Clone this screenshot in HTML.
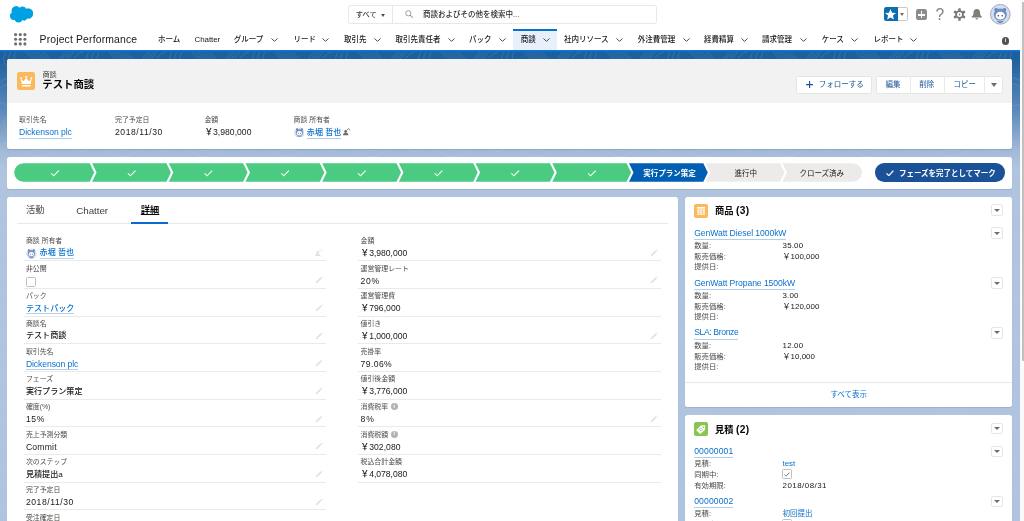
<!DOCTYPE html>
<html lang="ja">
<head>
<meta charset="utf-8">
<title>テスト商談 | Salesforce</title>
<style>
*{box-sizing:border-box;margin:0;padding:0}
html,body{width:1024px;height:521px;overflow:hidden;background:#b0c4df}
body{position:relative;will-change:transform;font-family:"Liberation Sans","Noto Sans CJK JP",sans-serif;font-size:7.5px;color:#181818;line-height:1}
a{color:#0b70cc;text-decoration:none}
.abs{position:absolute}
.t{position:absolute;white-space:nowrap;line-height:1}
/* background */
#bg{position:absolute;left:0;top:52px;width:1020px;height:469px;background:linear-gradient(to bottom,#1b5f9e 0,#1f619f 8px,#5f8bbd 60px,#a3bbd9 100px,#b0c4df 118px,#b0c4df 100%)}
#bgpat{position:absolute;left:0;top:52px;width:1020px;height:469px}
#scroll{position:absolute;left:1019.5px;top:0;width:4.5px;height:521px;background:#fafafa}
#thumb{position:absolute;left:1021.8px;top:2px;width:2.2px;height:359px;background:#c1c1c1;border-radius:1px 0 0 1px}
/* header */
#hdr{position:absolute;left:0;top:0;width:1019.5px;height:50px;background:#fff}
#navline{position:absolute;left:0;top:49.8px;width:1019.5px;height:2.2px;background:linear-gradient(#1a78d8,#0768c8)}
.nav{position:absolute;top:36.1px;font-size:7.5px;font-weight:500;color:#181818;white-space:nowrap;line-height:8px}
.chev{position:absolute;top:38.1px;width:7px;height:4px}
.card{position:absolute;background:#fff;border-radius:2.5px;box-shadow:0 1px 1px rgba(0,0,0,.10)}
.btn{position:absolute;background:#fff;border:1px solid #e7e5e4;border-radius:2.3px;color:#1b5297;font-size:7.5px;text-align:center;white-space:nowrap}
.lbl{position:absolute;font-size:6.9px;color:#4d4b49;white-space:nowrap;line-height:8px}
.val{position:absolute;font-size:8.1px;font-weight:500;color:#181818;white-space:nowrap;line-height:10px}
.val a,.lnk{border-bottom:.6px solid rgba(0,109,204,.32);padding-bottom:1.3px}
.lnk{padding-bottom:1.3px}
.dv a{padding-bottom:.3px}
.row{position:absolute;height:1px;background:#ebeae9}
.dd{position:absolute;width:11.5px;height:11.5px;border:1px solid #e6e5e4;border-radius:2.3px;background:#fff}
.dd:after{content:"";position:absolute;left:1.9px;top:3.3px;border-left:3.1px solid transparent;border-right:3.1px solid transparent;border-top:3.7px solid #706e6b}
.rl{position:absolute;font-size:7.4px;color:#4a4a48;white-space:nowrap;line-height:9px}
.rv{position:absolute;font-size:7.5px;color:#181818;white-space:nowrap;line-height:9px}
.rt{position:absolute;font-size:8.1px;white-space:nowrap;line-height:10px}
.cnt{font-size:10.2px;letter-spacing:.25px}
.pen{position:absolute;width:8px;height:8px}
/*FIT*/
#appname{font-size:10.4px!important;letter-spacing:0.152px;}
#nv1{font-size:7.95px!important;letter-spacing:-0.047px;}
#hacc{font-size:8.6px!important;letter-spacing:-0.054px;}
#hdate{font-size:8.6px!important;letter-spacing:0.543px;}
#hamt{font-size:8.6px!important;letter-spacing:0.027px;}
#tchat{font-size:9.8px!important;letter-spacing:-0.034px;}
#lv4{font-size:8.6px!important;letter-spacing:-0.085px;}
#lv6{font-size:8.6px!important;letter-spacing:0.699px;}
#lv7{font-size:8.6px!important;letter-spacing:0.215px;}
#lv9{font-size:8.6px!important;letter-spacing:0.562px;}
#rv0{font-size:8.6px!important;letter-spacing:-0.013px;}
#rv1{font-size:8.6px!important;letter-spacing:0.632px;}
#rv2{font-size:8.6px!important;letter-spacing:0.041px;}
#rv3{font-size:8.6px!important;letter-spacing:-0.013px;}
#rv4{font-size:8.6px!important;letter-spacing:0.391px;}
#rv5{font-size:8.6px!important;letter-spacing:-0.013px;}
#rv6{font-size:8.6px!important;letter-spacing:0.989px;}
#rv7{font-size:8.6px!important;letter-spacing:0.041px;}
#rv8{font-size:8.6px!important;letter-spacing:-0.013px;}
#p0{font-size:8.6px!important;letter-spacing:-0.075px;}
#p1{font-size:8.6px!important;letter-spacing:-0.072px;}
#p2{font-size:8.6px!important;letter-spacing:-0.368px;}
#pv00{font-size:7.95px!important;letter-spacing:0.165px;}
#pv01{font-size:7.95px!important;letter-spacing:0.020px;}
#pv10{font-size:7.95px!important;letter-spacing:0.087px;}
#pv11{font-size:7.95px!important;letter-spacing:0.020px;}
#pv20{font-size:7.95px!important;letter-spacing:0.165px;}
#pv21{font-size:7.95px!important;letter-spacing:0.026px;}
#q0{font-size:8.6px!important;letter-spacing:0.119px;}
#q1{font-size:8.6px!important;letter-spacing:0.119px;}
#qv00{font-size:7.95px!important;letter-spacing:-0.074px;}
#qv02{font-size:7.95px!important;letter-spacing:0.467px;}
/*ENDFIT*/</style>
</head>
<body>
<svg width="0" height="0" style="position:absolute"><defs><g id="astro"><circle cx="10.300" cy="10.300" r="9.900" fill="#d3deee" stroke="#8f9cb2" stroke-width=".8"/><circle cx="6.200" cy="5.800" r="1.900" fill="#6485bb"/><circle cx="14.400" cy="5.800" r="1.900" fill="#6485bb"/><ellipse cx="10.300" cy="10.600" rx="6.500" ry="6.100" fill="#6f90c6"/><ellipse cx="10.300" cy="11.700" rx="4.700" ry="3.900" fill="#fff"/><circle cx="8.400" cy="11.700" r=".75" fill="#27344d"/><circle cx="12.200" cy="11.700" r=".75" fill="#27344d"/><path d="M6.300 16.600c1.100 1.500 2.500 2.300 4 2.300s2.900-.8 4-2.300c-1.200.6-2.600.9-4 .9s-2.800-.3-4-.9z" fill="#5676ab"/></g><g id="astro2"><circle cx="10.300" cy="11" r="9.300" fill="#dde5f1" stroke="#c3cde0" stroke-width=".7"/><circle cx="5.600" cy="4.600" r="2.100" fill="#6485bb"/><circle cx="15" cy="4.600" r="2.100" fill="#6485bb"/><ellipse cx="10.300" cy="10.600" rx="6.900" ry="6.500" fill="#6f90c6"/><ellipse cx="10.300" cy="11.800" rx="5" ry="4.100" fill="#fff"/><circle cx="8.300" cy="11.800" r=".9" fill="#27344d"/><circle cx="12.300" cy="11.800" r=".9" fill="#27344d"/><path d="M6 17c1.100 1.500 2.700 2.400 4.300 2.400s3.200-.9 4.300-2.400c-1.300.6-2.800.9-4.300.9s-3-.3-4.300-.9z" fill="#5676ab"/></g><g id="chown"><circle cx="2.700" cy="3.400" r="1.450" fill="#706e6b"/><path d="M0 7.300c0-1.900 1.100-2.700 2.700-2.700s2.700.8 2.700 2.700z" fill="#706e6b"/><path d="M4 1.900L5.700.5l1.500 2.300" fill="none" stroke="#706e6b" stroke-width=".75"/></g><g id="pen"><path d="M1 5.800L5.600 1.200l1.200 1.200L2.200 7 .7 7.300z" fill="#e3e1e0"/><path d="M6.100.7l.5-.5 1.200 1.200-.5.500z" fill="#e3e1e0"/></g></defs></svg>
<div id="bg"></div>
<svg id="bgpat" width="1020" height="469" viewBox="0 0 1020 469"><defs><pattern id="pt" width="83" height="64" patternUnits="userSpaceOnUse"><g fill="none" stroke="#fff" stroke-opacity=".16" stroke-width=".7"><path d="M6 0c-3 4-3 9 0 14M11 0c-3 4-3 9 0 14M16 0c-2 3-2 6-1 9"/><path d="M26 0l8 9M29 0l8 9M32 0l8 9M35 0l8 9M38 0l8 9M41 0l8 9M44 0l7 8"/><path d="M58 9c2-3 4-6 7-9M61 9c2-3 4-6 7-9M64 9c2-3 4-6 7-9M67 9c2-3 4-6 7-9"/><path d="M74 6c2-3 5-5 9-6"/><path d="M0 30c8-6 18-6 26 0s18 6 26 0 18-6 31 0M0 36c8-6 18-6 26 0s18 6 26 0 18-6 31 0M0 50c10 5 20 5 30 0s20-5 30 0 15 4 23 0"/></g></pattern></defs><linearGradient id="mg" x1="0" y1="0" x2="0" y2="1"><stop offset="0" stop-color="#fff"/><stop offset=".2" stop-color="#fff" stop-opacity=".8"/><stop offset=".3" stop-color="#fff" stop-opacity=".35"/><stop offset="1" stop-color="#fff" stop-opacity=".3"/></linearGradient><mask id="mk"><rect width="1020" height="469" fill="url(#mg)"/></mask><rect width="1020" height="469" fill="url(#pt)" mask="url(#mk)"/></svg>
<div id="scroll"><div id="thumb" style="left:2.3px"></div></div>
<div id="hdr"></div>
<div id="navline"></div>


<!-- GLOBAL HEADER -->
<svg class="abs" style="left:10px;top:6px" width="23" height="17" viewBox="0 0 23 16.4" preserveAspectRatio="none"><path fill="#00a1e0" d="M9.6 1.8a4.1 4.1 0 0 1 3-1.3 4.2 4.2 0 0 1 3.6 2.1 5 5 0 0 1 2-.4 5 5 0 0 1 0 10 5 5 0 0 1-1-.1 3.6 3.6 0 0 1-4.8 1.5 4.2 4.2 0 0 1-7.7-.2 3.9 3.9 0 0 1-.8.1A3.9 3.9 0 0 1 1.900 6.200 4.500 4.500 0 0 1 9.600 1.800z"/></svg>
<div class="abs" style="left:347.9px;top:5px;width:309.6px;height:18.6px;border:1px solid #e9e8e7;border-radius:2.3px;background:#fff"></div>
<div class="abs" style="left:392.4px;top:5px;width:1px;height:18.6px;background:#e9e8e7"></div>
<div class="t" style="left:355.8px;top:11px;font-size:7.2px;font-weight:500;color:#3e3e3c">すべて</div>
<div class="abs" style="left:380.7px;top:13.5px;border-left:2.7px solid transparent;border-right:2.7px solid transparent;border-top:3.4px solid #514f4d"></div>
<svg class="abs" style="left:404.5px;top:9.8px" width="8" height="8" viewBox="0 0 8 8"><circle cx="3.3" cy="3.3" r="2.6" fill="none" stroke="#9c9a98" stroke-width=".95"/><path d="M5.2 5.2L7.4 7.4" stroke="#9c9a98" stroke-width="1.05" stroke-linecap="round"/></svg>
<div class="t" style="left:423px;top:10.8px;font-size:7.5px;font-weight:500;color:#2e2e2c">商談およびその他を検索中...</div>

<!-- header right icons -->
<div class="abs" style="left:883.5px;top:7.4px;width:14.6px;height:14px;background:#0c6eae;border-radius:2.3px 0 0 2.3px"></div>
<svg class="abs" style="left:885.3px;top:9px" width="11" height="10.6" viewBox="0 0 11 10.6"><path fill="#fff" d="M5.5 0l1.5 3.7 4 .3-3.100 2.600 1 3.900-3.400-2.100-3.400 2.100 1-3.900L0 4l4-.3z"/></svg>
<div class="abs" style="left:898.1px;top:7.4px;width:10px;height:14px;border:.6px solid #c9c7c5;border-left:0;border-radius:0 2.3px 2.3px 0;background:#fff"></div>
<div class="abs" style="left:900.3px;top:13.3px;border-left:2.6px solid transparent;border-right:2.6px solid transparent;border-top:3.100px solid #706e6b"></div>
<div class="abs" style="left:916px;top:9.400px;width:11.4px;height:10.8px;background:#8e8c8a;border-radius:2.2px"></div>
<div class="abs" style="left:918.1px;top:14.1px;width:7.3px;height:1.45px;background:#fff"></div>
<div class="abs" style="left:921.0px;top:11.2px;width:1.45px;height:7.3px;background:#fff"></div>
<div class="t" style="left:935.4px;top:6.700px;font-size:15.6px;color:#838180;font-weight:400">?</div>
<svg class="abs" style="left:953.2px;top:8px" width="13" height="13" viewBox="0 0 13 13"><g fill="#7a7876"><circle cx="6.5" cy="6.5" r="4.300"/><g id="gt"><rect x="5.300" y="0.200" width="2.400" height="12.600" rx=".5"/></g><use href="#gt" transform="rotate(60 6.5 6.5)"/><use href="#gt" transform="rotate(120 6.5 6.5)"/></g><circle cx="6.5" cy="6.5" r="2.500" fill="#fff"/><path d="M6.9 4.800L5.600 6.700h.9l-.3 1.500 1.300-1.900h-.9z" fill="#706e6b"/></svg>
<svg class="abs" style="left:971.1px;top:9.1px" width="11.6" height="11.000" viewBox="0 0 12 11.400"><path fill="#807e7c" d="M6 0C3.900 0 2.600 1.600 2.600 3.600c0 2.400-.7 3.500-1.800 4.300-.4.300-.2.800.2.800h10c.4 0 .6-.5.200-.8-1.100-.8-1.800-1.900-1.800-4.300C9.400 1.600 8.100 0 6 0zM4.600 9.500a1.400 1.400 0 0 0 2.800 0z"/></svg>
<svg class="abs" style="left:990.4px;top:4.400px" width="20.600" height="20.600" viewBox="0 0 20.600 20.600"><use href="#astro"/></svg>

<!-- NAV BAR -->
<svg class="abs" style="left:14.2px;top:33.3px" width="12.500" height="12.500" viewBox="0 0 12.500 12.500"><g fill="#706e6b"><circle cx="1.60" cy="1.60" r="1.55"/><circle cx="6.25" cy="1.60" r="1.55"/><circle cx="10.90" cy="1.60" r="1.55"/><circle cx="1.60" cy="6.25" r="1.55"/><circle cx="6.25" cy="6.25" r="1.55"/><circle cx="10.90" cy="6.25" r="1.55"/><circle cx="1.60" cy="10.90" r="1.55"/><circle cx="6.25" cy="10.90" r="1.55"/><circle cx="10.90" cy="10.90" r="1.55"/></g></svg>
<div class="t" id="appname" style="left:39.600px;top:34.600px;font-size:10.700px;color:#181818">Project Performance</div>
<div class="abs" style="left:513px;top:28.800px;width:44px;height:21.200px;background:#e8f0fb"></div>
<div class="abs" style="left:513px;top:28.700px;width:44px;height:1.900px;background:#0870d2"></div>
<div class="nav" id="nv0" style="left:158px">ホーム</div>
<div class="nav" id="nv1" style="left:194.5px">Chatter</div>
<div class="nav" id="nv2" style="left:233.75px">グループ</div>
<svg class="chev" style="left:271px" viewBox="0 0 7 4"><path d="M.5.400L3.500 3.400 6.500.400" fill="none" stroke="#4a4846" stroke-width="1"/></svg>
<div class="nav" id="nv3" style="left:293.5px">リード</div>
<svg class="chev" style="left:322px" viewBox="0 0 7 4"><path d="M.5.400L3.500 3.400 6.500.400" fill="none" stroke="#4a4846" stroke-width="1"/></svg>
<div class="nav" id="nv4" style="left:344px">取引先</div>
<svg class="chev" style="left:374px" viewBox="0 0 7 4"><path d="M.5.400L3.500 3.400 6.500.400" fill="none" stroke="#4a4846" stroke-width="1"/></svg>
<div class="nav" id="nv5" style="left:395.5px">取引先責任者</div>
<svg class="chev" style="left:448px" viewBox="0 0 7 4"><path d="M.5.400L3.500 3.400 6.500.400" fill="none" stroke="#4a4846" stroke-width="1"/></svg>
<div class="nav" id="nv6" style="left:469px">パック</div>
<svg class="chev" style="left:498.5px" viewBox="0 0 7 4"><path d="M.5.400L3.500 3.400 6.500.400" fill="none" stroke="#4a4846" stroke-width="1"/></svg>
<div class="nav" id="nv7" style="left:520.75px">商談</div>
<svg class="chev" style="left:542.5px" viewBox="0 0 7 4"><path d="M.5.400L3.500 3.400 6.500.400" fill="none" stroke="#4a4846" stroke-width="1"/></svg>
<div class="nav" id="nv8" style="left:564px">社内リソース</div>
<svg class="chev" style="left:616px" viewBox="0 0 7 4"><path d="M.5.400L3.500 3.400 6.500.400" fill="none" stroke="#4a4846" stroke-width="1"/></svg>
<div class="nav" id="nv9" style="left:637.75px">外注費管理</div>
<svg class="chev" style="left:682.5px" viewBox="0 0 7 4"><path d="M.5.400L3.500 3.400 6.500.400" fill="none" stroke="#4a4846" stroke-width="1"/></svg>
<div class="nav" id="nv10" style="left:704px">経費精算</div>
<svg class="chev" style="left:740.75px" viewBox="0 0 7 4"><path d="M.5.400L3.500 3.400 6.500.400" fill="none" stroke="#4a4846" stroke-width="1"/></svg>
<div class="nav" id="nv11" style="left:762px">請求管理</div>
<svg class="chev" style="left:799.75px" viewBox="0 0 7 4"><path d="M.5.400L3.500 3.400 6.500.400" fill="none" stroke="#4a4846" stroke-width="1"/></svg>
<div class="nav" id="nv12" style="left:821.75px">ケース</div>
<svg class="chev" style="left:851px" viewBox="0 0 7 4"><path d="M.5.400L3.500 3.400 6.500.400" fill="none" stroke="#4a4846" stroke-width="1"/></svg>
<div class="nav" id="nv13" style="left:873.5px">レポート</div>
<svg class="chev" style="left:910px" viewBox="0 0 7 4"><path d="M.5.400L3.500 3.400 6.500.400" fill="none" stroke="#4a4846" stroke-width="1"/></svg>
<div class="abs" style="left:1001.800px;top:37.400px;width:7.600px;height:7.600px;border-radius:50%;background:#54524f"></div>
<div class="t" style="left:1004.700px;top:38.400px;font-size:5.500px;font-weight:700;color:#fff">i</div>

<!-- CARDS -->
<div class="card" id="c1" style="left:7px;top:59px;width:1005.4px;height:90px"></div>
<div class="card" id="c2" style="left:7px;top:156.7px;width:1005.4px;height:32.8px"></div>
<div class="card" id="c3" style="left:7.4px;top:196.8px;width:670.2px;height:330px"></div>
<div class="card" id="c4" style="left:684.8px;top:196.8px;width:327.6px;height:210.2px"></div>
<div class="card" id="c5" style="left:684.8px;top:415.4px;width:327.6px;height:120px"></div>

<!-- RECORD HEADER -->
<div class="abs" style="left:7px;top:59px;width:1005.4px;height:43.800px;background:#f3f2f2;border-radius:2.500px 2.500px 0 0"></div>
<div class="abs" style="left:17px;top:71.800px;width:18.400px;height:18.400px;background:#fcb95b;border-radius:2.300px"></div>
<svg class="abs" style="left:17px;top:71.800px" width="18.400" height="18.400" viewBox="0 0 18.400 18.400"><g fill="#fff"><circle cx="4.100" cy="6.200" r=".95"/><circle cx="9.200" cy="5.000" r="1.050"/><circle cx="14.300" cy="6.200" r=".95"/><path d="M3.700 6.800l2.900 2.500 2.600-3.600 2.600 3.600 2.900-2.500-1.100 5.300H4.800z"/><rect x="4.800" y="12.900" width="8.800" height="1.600" rx=".3"/></g></svg>
<div class="t" style="left:42.400px;top:71.300px;font-size:7.200px;color:#3e3e3c">商談</div>
<div class="t" id="rtitle" style="left:42.300px;top:79.900px;font-size:10.400px;font-weight:700;color:#080707">テスト商談</div>

<div class="btn" style="left:795.8px;top:75.5px;width:76.600px;height:18px"></div>
<svg class="abs" style="left:805.8px;top:80.900px" width="7.200" height="7.200" viewBox="0 0 7.200 7.200"><path d="M3.600.1v7M.1 3.600h7" stroke="#1b5297" stroke-width="1.15"/></svg>
<div class="t" id="bfollow" style="left:818.800px;top:80.900px;font-size:7.500px;color:#1b5297">フォローする</div>
<div class="btn" style="left:875.600px;top:75.5px;width:127.100px;height:18px"></div>
<div class="abs" style="left:909.600px;top:75.5px;width:1px;height:18px;background:#ebeae9"></div>
<div class="abs" style="left:943.500px;top:75.5px;width:1px;height:18px;background:#ebeae9"></div>
<div class="abs" style="left:984.400px;top:75.5px;width:1px;height:18px;background:#ebeae9"></div>
<div class="t" style="left:885.400px;top:80.900px;font-size:7.500px;color:#1b5297">編集</div>
<div class="t" style="left:919.200px;top:80.900px;font-size:7.500px;color:#1b5297">削除</div>
<div class="t" style="left:953.600px;top:80.900px;font-size:7.500px;color:#1b5297">コピー</div>
<div class="abs" style="left:990.600px;top:83.100px;border-left:3.600px solid transparent;border-right:3.600px solid transparent;border-top:4.400px solid #706e6b"></div>

<div class="lbl" style="left:19px;top:115.600px">取引先名</div>
<div class="val" style="left:19px;top:127.200px"><a id="hacc" href="#">Dickenson plc</a></div>
<div class="lbl" style="left:115px;top:115.600px">完了予定日</div>
<div class="val" id="hdate" style="left:115px;top:127.200px">2018/11/30</div>
<div class="lbl" style="left:204.400px;top:115.600px">金額</div>
<div class="val" id="hamt" style="left:204.400px;top:127.200px">￥3,980,000</div>
<div class="lbl" style="left:293.600px;top:115.600px">商談 所有者</div>
<svg class="abs" style="left:293.600px;top:126.600px" width="10.900" height="10.900" viewBox="0 0 20.600 20.600"><use href="#astro2"/></svg>
<div class="val" style="left:306.800px;top:127.900px"><a href="#">赤堀 哲也</a></div>
<svg class="abs" style="left:343.100px;top:128.300px" width="7.400" height="7.400" viewBox="0 0 7.400 7.400"><use href="#chown"/></svg>


<!-- PATH -->
<svg class="abs" style="left:0;top:0" width="1024" height="200" viewBox="0 0 1024 200"><path d="M23.45 163.30H89.70L94.20 172.55L89.70 181.80H23.45A9.25 9.25 0 0 1 23.45 163.30z" fill="#4bca81"/><path d="M51.10 173.25l2.6 2.6 5.1-5.3" fill="none" stroke="#fff" stroke-width="1.05"/><path d="M92.10 163.30H166.40L170.90 172.55L166.40 181.80H92.10L96.60 172.55z" fill="#4bca81"/><path d="M127.80 173.25l2.6 2.6 5.1-5.3" fill="none" stroke="#fff" stroke-width="1.05"/><path d="M168.80 163.30H243.10L247.60 172.55L243.10 181.80H168.80L173.30 172.55z" fill="#4bca81"/><path d="M204.50 173.25l2.6 2.6 5.1-5.3" fill="none" stroke="#fff" stroke-width="1.05"/><path d="M245.50 163.30H319.80L324.30 172.55L319.80 181.80H245.50L250.00 172.55z" fill="#4bca81"/><path d="M281.20 173.25l2.6 2.6 5.1-5.3" fill="none" stroke="#fff" stroke-width="1.05"/><path d="M322.20 163.30H396.50L401.00 172.55L396.50 181.80H322.20L326.70 172.55z" fill="#4bca81"/><path d="M357.90 173.25l2.6 2.6 5.1-5.3" fill="none" stroke="#fff" stroke-width="1.05"/><path d="M398.90 163.30H473.20L477.70 172.55L473.20 181.80H398.90L403.40 172.55z" fill="#4bca81"/><path d="M434.60 173.25l2.6 2.6 5.1-5.3" fill="none" stroke="#fff" stroke-width="1.05"/><path d="M475.60 163.30H549.90L554.40 172.55L549.90 181.80H475.60L480.10 172.55z" fill="#4bca81"/><path d="M511.30 173.25l2.6 2.6 5.1-5.3" fill="none" stroke="#fff" stroke-width="1.05"/><path d="M552.30 163.30H626.60L631.10 172.55L626.60 181.80H552.30L556.80 172.55z" fill="#4bca81"/><path d="M588.00 173.25l2.6 2.6 5.1-5.3" fill="none" stroke="#fff" stroke-width="1.05"/><path d="M629.00 163.30H703.30L707.80 172.55L703.30 181.80H629.00L633.50 172.55z" fill="#005fb2"/><path d="M705.70 163.30H780.00L784.50 172.55L780.00 181.80H705.70L710.20 172.55z" fill="#ecebea"/><path d="M782.40 163.30H852.75A9.25 9.25 0 0 1 852.75 181.80H782.40L786.90 172.55z" fill="#ecebea"/></svg>
<div class="t" id="pcur" style="left:643.2px;top:169.8px;font-size:7.500px;font-weight:700;color:#fff">実行プラン策定</div>
<div class="t" style="left:734.6px;top:169.8px;font-size:7.500px;color:#181818">進行中</div>
<div class="t" style="left:799.400px;top:169.8px;font-size:7.500px;color:#181818">クローズ済み</div>
<div class="abs" style="left:875.400px;top:163.400px;width:129.600px;height:18.400px;border-radius:9.200px;background:#1b5297"></div>
<svg class="abs" style="left:885.600px;top:169.600px" width="8" height="6.400" viewBox="0 0 8 6.400"><path d="M.5 3.400l2.300 2.300L7.400.7" fill="none" stroke="#fff" stroke-width="1.25"/></svg>
<div class="t" id="pbtn" style="left:898.900px;top:169.8px;font-size:7.500px;color:#fff;font-weight:700">フェーズを完了としてマーク</div>

<!-- DETAIL CARD -->
<div class="abs" style="left:16.600px;top:223.300px;width:651.600px;height:1px;background:#e9e8e7"></div>
<div class="abs" style="left:131px;top:221.800px;width:37px;height:1.800px;background:#0a6ad0"></div>
<div class="t" style="left:25.900px;top:206.300px;font-size:9.260px;color:#3e3e3c">活動</div>
<div class="t" id="tchat" style="left:76.200px;top:205.600px;font-size:9.260px;color:#3e3e3c">Chatter</div>
<div class="t" style="left:140.800px;top:206.200px;font-size:9.260px;font-weight:700;color:#080707;text-decoration:underline">詳細</div>
<div class="lbl" style="left:25.900px;top:236.90px">商談 所有者</div>
<svg class="abs" style="left:26.200px;top:248.00px" width="10.800" height="10.800" viewBox="0 0 20.600 20.600"><use href="#astro2"/></svg>
<div class="val dv" style="left:39.600px;top:248.40px"><a href="#">赤堀 哲也</a></div>
<div class="row" style="left:23.500px;top:260.20px;width:302.200px"></div>
<svg class="abs" style="left:314.600px;top:248.80px;opacity:.2" width="7.400" height="7.400" viewBox="0 0 7.400 7.400"><use href="#chown"/></svg>
<div class="lbl" style="left:25.900px;top:264.57px">非公開</div>
<div class="abs" style="left:26.000px;top:276.87px;width:9.700px;height:9.700px;border:.7px solid #c2c0be;border-radius:1.500px;background:#fff"></div>
<div class="row" style="left:23.500px;top:287.87px;width:302.200px"></div>
<svg class="pen" style="left:314.600px;top:276.27px" viewBox="0 0 8 8"><use href="#pen"/></svg>
<div class="lbl" style="left:25.900px;top:292.24px">パック</div>
<div class="val dv" id="lv2" style="left:25.900px;top:303.74px"><a href="#">テストパック</a></div>
<div class="row" style="left:23.500px;top:315.54px;width:302.200px"></div>
<svg class="pen" style="left:314.600px;top:303.94px" viewBox="0 0 8 8"><use href="#pen"/></svg>
<div class="lbl" style="left:25.900px;top:319.91px">商談名</div>
<div class="val dv" id="lv3" style="left:25.900px;top:331.41px">テスト商談</div>
<div class="row" style="left:23.500px;top:343.21px;width:302.200px"></div>
<svg class="pen" style="left:314.600px;top:331.61px" viewBox="0 0 8 8"><use href="#pen"/></svg>
<div class="lbl" style="left:25.900px;top:347.58px">取引先名</div>
<div class="val dv" id="lv4" style="left:25.900px;top:358.58px"><a href="#">Dickenson plc</a></div>
<div class="row" style="left:23.500px;top:370.88px;width:302.200px"></div>
<svg class="pen" style="left:314.600px;top:359.28px" viewBox="0 0 8 8"><use href="#pen"/></svg>
<div class="lbl" style="left:25.900px;top:375.25px">フェーズ</div>
<div class="val dv" id="lv5" style="left:25.900px;top:386.75px">実行プラン策定</div>
<div class="row" style="left:23.500px;top:398.55px;width:302.200px"></div>
<svg class="pen" style="left:314.600px;top:386.95px" viewBox="0 0 8 8"><use href="#pen"/></svg>
<div class="lbl" style="left:25.900px;top:402.92px">確度(%)</div>
<div class="val dv" id="lv6" style="left:25.900px;top:413.92px">15%</div>
<div class="row" style="left:23.500px;top:426.22px;width:302.200px"></div>
<svg class="pen" style="left:314.600px;top:414.62px" viewBox="0 0 8 8"><use href="#pen"/></svg>
<div class="lbl" style="left:25.900px;top:430.59px">売上予測分類</div>
<div class="val dv" id="lv7" style="left:25.900px;top:441.59px">Commit</div>
<div class="row" style="left:23.500px;top:453.89px;width:302.200px"></div>
<svg class="pen" style="left:314.600px;top:442.29px" viewBox="0 0 8 8"><use href="#pen"/></svg>
<div class="lbl" style="left:25.900px;top:458.26px">次のステップ</div>
<div class="val dv" id="lv8" style="left:25.900px;top:469.76px">見積提出a</div>
<div class="row" style="left:23.500px;top:481.56px;width:302.200px"></div>
<svg class="pen" style="left:314.600px;top:469.96px" viewBox="0 0 8 8"><use href="#pen"/></svg>
<div class="lbl" style="left:25.900px;top:485.93px">完了予定日</div>
<div class="val dv" id="lv9" style="left:25.900px;top:496.93px">2018/11/30</div>
<div class="row" style="left:23.500px;top:509.23px;width:302.200px"></div>
<svg class="pen" style="left:314.600px;top:497.63px" viewBox="0 0 8 8"><use href="#pen"/></svg>
<div class="lbl" style="left:25.900px;top:513.60px">受注確定日</div>
<div class="row" style="left:23.500px;top:536.90px;width:302.200px"></div>
<div class="lbl" style="left:360.600px;top:236.90px">金額</div>
<div class="val dv" id="rv0" style="left:360.600px;top:247.90px">￥3,980,000</div>
<div class="row" style="left:357.800px;top:260.20px;width:302.800px"></div>
<svg class="pen" style="left:650.200px;top:248.60px" viewBox="0 0 8 8"><use href="#pen"/></svg>
<div class="lbl" style="left:360.600px;top:264.57px">運営管理レート</div>
<div class="val dv" id="rv1" style="left:360.600px;top:275.57px">20%</div>
<div class="row" style="left:357.800px;top:287.87px;width:302.800px"></div>
<svg class="pen" style="left:650.200px;top:276.27px" viewBox="0 0 8 8"><use href="#pen"/></svg>
<div class="lbl" style="left:360.600px;top:292.24px">運営管理費</div>
<div class="val dv" id="rv2" style="left:360.600px;top:303.24px">￥796,000</div>
<div class="row" style="left:357.800px;top:315.54px;width:302.800px"></div>
<div class="lbl" style="left:360.600px;top:319.91px">値引き</div>
<div class="val dv" id="rv3" style="left:360.600px;top:330.91px">￥1,000,000</div>
<div class="row" style="left:357.800px;top:343.21px;width:302.800px"></div>
<svg class="pen" style="left:650.200px;top:331.61px" viewBox="0 0 8 8"><use href="#pen"/></svg>
<div class="lbl" style="left:360.600px;top:347.58px">売掛率</div>
<div class="val dv" id="rv4" style="left:360.600px;top:358.58px">79.06%</div>
<div class="row" style="left:357.800px;top:370.88px;width:302.800px"></div>
<div class="lbl" style="left:360.600px;top:375.25px">値引後金額</div>
<div class="val dv" id="rv5" style="left:360.600px;top:386.25px">￥3,776,000</div>
<div class="row" style="left:357.800px;top:398.55px;width:302.800px"></div>
<div class="lbl" style="left:360.600px;top:402.92px">消費税率</div>
<div class="abs" style="left:390.80px;top:403.42px;width:6.900px;height:6.900px;border-radius:50%;background:#b5b3b1"></div><div class="t" style="left:393.55px;top:404.62px;font-size:4.800px;font-weight:700;color:#fff">i</div>
<div class="val dv" id="rv6" style="left:360.600px;top:413.92px">8%</div>
<div class="row" style="left:357.800px;top:426.22px;width:302.800px"></div>
<svg class="pen" style="left:650.200px;top:414.62px" viewBox="0 0 8 8"><use href="#pen"/></svg>
<div class="lbl" style="left:360.600px;top:430.59px">消費税額</div>
<div class="abs" style="left:390.80px;top:431.09px;width:6.900px;height:6.900px;border-radius:50%;background:#b5b3b1"></div><div class="t" style="left:393.55px;top:432.29px;font-size:4.800px;font-weight:700;color:#fff">i</div>
<div class="val dv" id="rv7" style="left:360.600px;top:441.59px">￥302,080</div>
<div class="row" style="left:357.800px;top:453.89px;width:302.800px"></div>
<div class="lbl" style="left:360.600px;top:458.26px">税込合計金額</div>
<div class="val dv" id="rv8" style="left:360.600px;top:469.26px">￥4,078,080</div>
<div class="row" style="left:357.800px;top:481.56px;width:302.800px"></div>

<!-- RIGHT CARD 1: PRODUCTS -->
<div class="abs" style="left:694.200px;top:204px;width:13.800px;height:13.800px;background:#fcb95b;border-radius:2px"></div>
<svg class="abs" style="left:696.700px;top:206.600px" width="8.600" height="8.400" viewBox="0 0 8.600 8.400"><g fill="#fff"><rect x="0" y="0" width="8.600" height="1.400"/><rect x=".3" y="1.400" width="2.300" height="5.400" opacity=".72"/><rect x="3.150" y="1.400" width="2.300" height="5.400" opacity=".72"/><rect x="6" y="1.400" width="2.300" height="5.400" opacity=".72"/><rect x="0" y="7.300" width="8.600" height="1"/></g></svg>
<div class="t" id="t1" style="left:715px;top:206.400px;font-size:9.260px;font-weight:700;color:#080707">商品 <span class="cnt">(3)</span></div>
<div class="dd" style="left:991.400px;top:204.400px"></div>
<div class="rt" style="left:694.200px;top:227.62px"><a class="lnk" id="p0" href="#">GenWatt Diesel 1000kW</a></div>
<div class="dd" style="left:991.400px;top:227.40px"></div>
<div class="rl" style="left:694.200px;top:241.14px">数量:</div>
<div class="rv" id="pv00" style="left:782.600px;top:241.05px">35.00</div>
<div class="rl" style="left:694.200px;top:251.79px">販売価格:</div>
<div class="rv" id="pv01" style="left:782.600px;top:252.05px">￥100,000</div>
<div class="rl" style="left:694.200px;top:262.44px">提供日:</div>
<div class="rt" style="left:694.200px;top:277.52px"><a class="lnk" id="p1" href="#">GenWatt Propane 1500kW</a></div>
<div class="dd" style="left:991.400px;top:277.30px"></div>
<div class="rl" style="left:694.200px;top:291.04px">数量:</div>
<div class="rv" id="pv10" style="left:782.600px;top:291.05px">3.00</div>
<div class="rl" style="left:694.200px;top:301.69px">販売価格:</div>
<div class="rv" id="pv11" style="left:782.600px;top:302.05px">￥120,000</div>
<div class="rl" style="left:694.200px;top:312.34px">提供日:</div>
<div class="rt" style="left:694.200px;top:327.42px"><a class="lnk" id="p2" href="#">SLA: Bronze</a></div>
<div class="dd" style="left:991.400px;top:327.20px"></div>
<div class="rl" style="left:694.200px;top:340.94px">数量:</div>
<div class="rv" id="pv20" style="left:782.600px;top:341.05px">12.00</div>
<div class="rl" style="left:694.200px;top:351.59px">販売価格:</div>
<div class="rv" id="pv21" style="left:782.600px;top:352.05px">￥10,000</div>
<div class="rl" style="left:694.200px;top:362.24px">提供日:</div>
<div class="abs" style="left:684.800px;top:381.800px;width:327.600px;height:1px;background:#e9e8e7"></div>
<div class="t" style="left:830.400px;top:391.000px;font-size:7.500px"><a href="#">すべて表示</a></div>

<!-- RIGHT CARD 2: QUOTES -->
<div class="abs" style="left:694.200px;top:422.200px;width:13.800px;height:13.800px;background:#88c651;border-radius:2px"></div>
<svg class="abs" style="left:696.400px;top:424.600px" width="9.400" height="9" viewBox="0 0 9.400 9"><path fill="#fff" d="M4.800.5L8.700.3c.3 0 .5.200.5.500L9 4.700 4.600 8.800c-.2.200-.5.200-.7 0L.5 5.400c-.2-.2-.2-.5 0-.7z"/><circle cx="7.200" cy="2.200" r=".8" fill="#88c651"/><path d="M3.200 4.200l1.300-1.300 2 2-1.300 1.300z" fill="none" stroke="#88c651" stroke-width=".7"/></svg>
<div class="t" id="t2" style="left:715px;top:424.800px;font-size:9.260px;font-weight:700;color:#080707">見積 <span class="cnt">(2)</span></div>
<div class="dd" style="left:991.400px;top:422.800px"></div>
<div class="rt" style="left:694.200px;top:446.12px"><a class="lnk" id="q0" href="#">00000001</a></div>
<div class="dd" style="left:991.400px;top:445.60px"></div>
<div class="rl" style="left:694.200px;top:459.34px">見積:</div>
<div class="rv" id="qv00" style="left:782.600px;top:458.85px"><a href="#">test</a></div>
<div class="rl" style="left:694.200px;top:470.19px">同期中:</div>
<div class="abs" style="left:782.300px;top:469.15px;width:9.600px;height:9.600px;border:.7px solid #c2c0be;border-radius:1.500px;background:#fff"></div>
<svg class="abs" style="left:784.300px;top:471.95px" width="5.800" height="4.800" viewBox="0 0 5.600 4.600"><path d="M.4 2.400l1.600 1.600L5.200.5" fill="none" stroke="#706e6b" stroke-width=".85"/></svg>
<div class="rl" style="left:694.200px;top:481.04px">有効期限:</div>
<div class="rv" id="qv02" style="left:782.600px;top:480.55px">2018/08/31</div>
<div class="rt" style="left:694.200px;top:496.02px"><a class="lnk" id="q1" href="#">00000002</a></div>
<div class="dd" style="left:991.400px;top:495.50px"></div>
<div class="rl" style="left:694.200px;top:509.24px">見積:</div>
<div class="rv" id="qv10" style="left:782.600px;top:509.14px;font-size:7.5px"><a href="#">初回提出</a></div>
<div class="rl" style="left:694.200px;top:520.09px">同期中:</div>
<div class="abs" style="left:782.300px;top:519.05px;width:9.600px;height:9.600px;border:.7px solid #c2c0be;border-radius:1.500px;background:#fff"></div>
<div class="rl" style="left:694.200px;top:530.94px">有効期限:</div>

</body>
</html>
